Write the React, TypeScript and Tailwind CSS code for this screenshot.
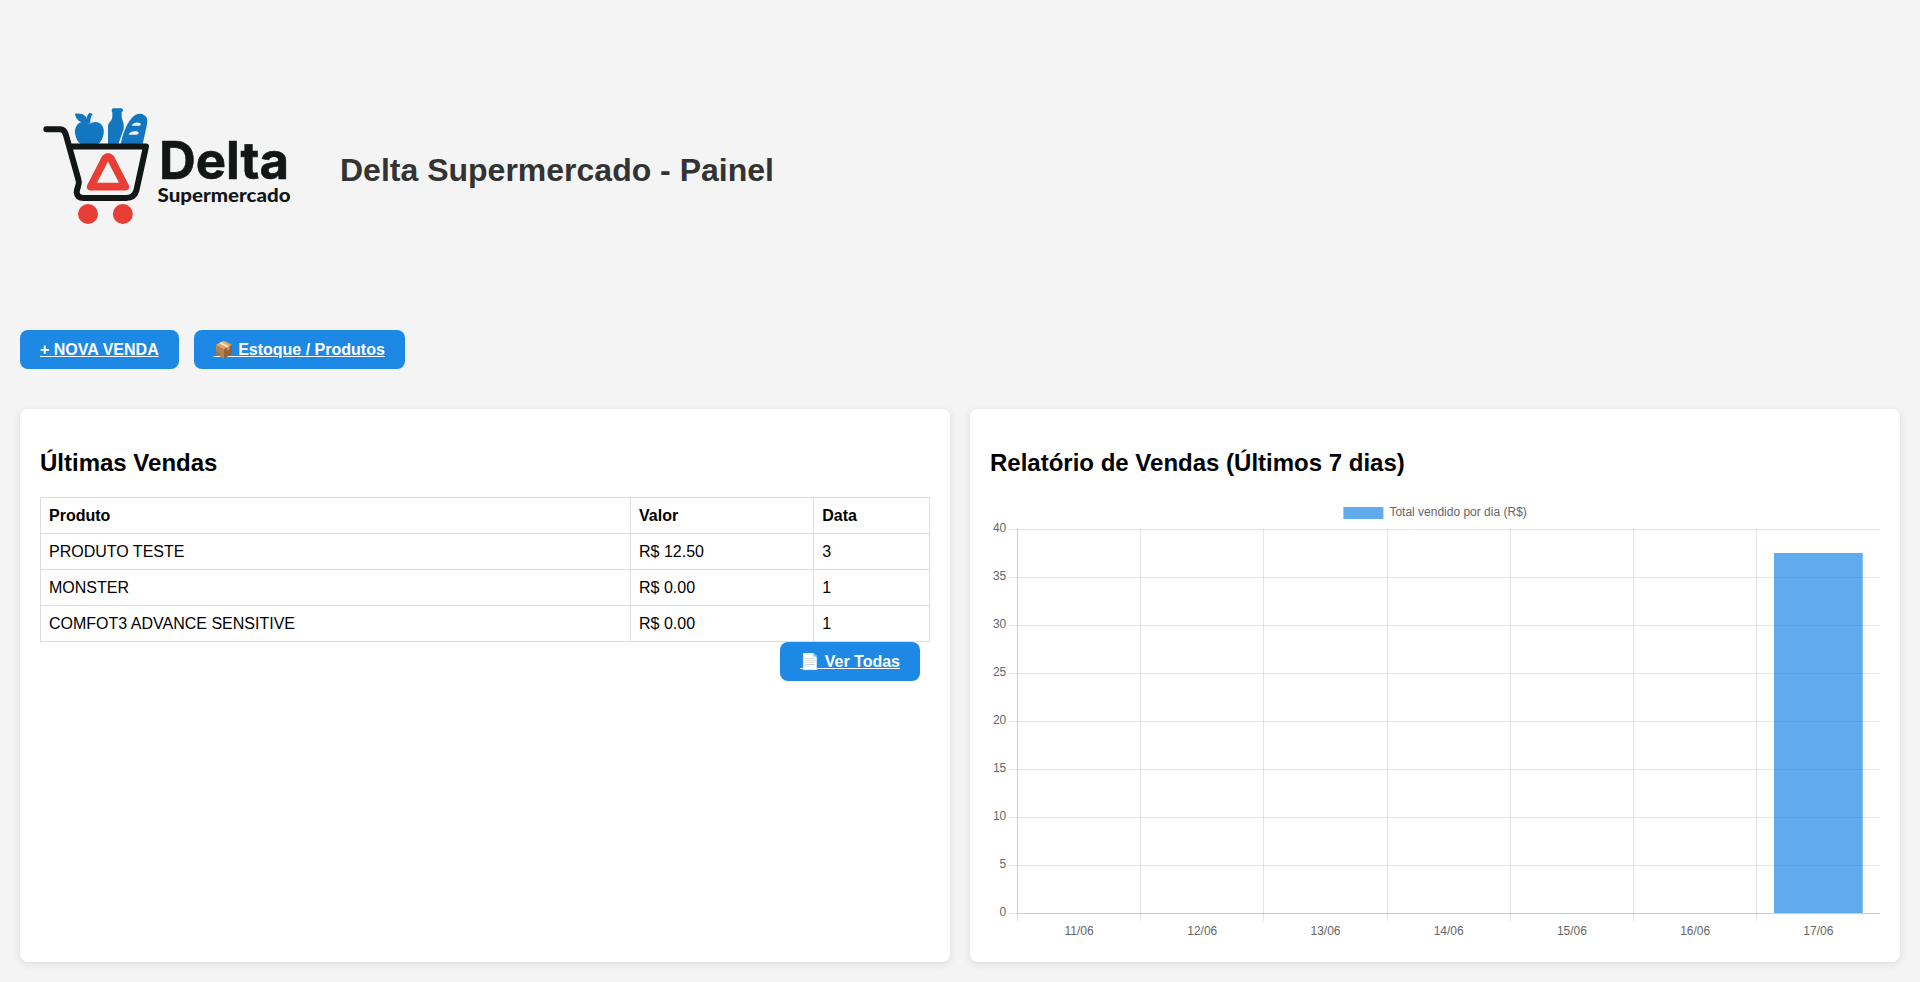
import type { ReactNode } from "react";

const sales = [
  { product: "PRODUTO TESTE", value: "R$ 12.50", date: "3" },
  { product: "MONSTER", value: "R$ 0.00", date: "1" },
  { product: "COMFOT3 ADVANCE SENSITIVE", value: "R$ 0.00", date: "1" },
];

const days = ["11/06", "12/06", "13/06", "14/06", "15/06", "16/06", "17/06"];
const totals = [0, 0, 0, 0, 0, 0, 37.5];
const ticks = [40, 35, 30, 25, 20, 15, 10, 5, 0];

function Logo() {
  return (
    <svg viewBox="0 0 300 300" className="size-[300px] shrink-0" role="img" aria-label="Delta Supermercado">
      <g transform="translate(10 75) scale(0.33333)">
        <g fill="#1277c0">
          <path d="M178 88C187 80 199 79 208 84C219 90 223 103 221 116C219 130 212 141 204 148H153C144 142 137 130 135 115C134 101 139 89 149 83C158 79 168 82 178 88Z" />
          <path d="M172 84C173 63 160 53 135 56C137 74 150 84 172 84Z" />
          <path d="M170 86C168 70 171 60 178 53L188 57C182 66 180 74 181 86Z" />
          <path d="M249 40H275Q279 41 279 46Q279 51 275 52V66C276 75 281 80 281 90V102L265 148H234V95C234 81 246 79 247 66V52Q245 50 245 46Q245 41 249 40Z" />
          <path d="M272 148C278 119 288 88 306 68C317 56 331 53 343 61C354 68 353 80 350 93L338 148Z" />
        </g>
        <g fill="#f4f4f4">
          <path d="M305 92C309 84 316 82 326 83C335 84 334 92 325 92Z" />
          <path d="M295 119C300 111 307 108 319 109C329 111 327 119 319 119Z" />
        </g>
        <path
          d="M49 102.500H91C101 102.500 104 108 107 117L146 257C150 270 140 277 140 292C141 304 149 309 161 309H288C304 309 314 303 319 287L348 154.500H121"
          fill="none"
          stroke="#121615"
          strokeWidth="18"
          strokeLinecap="round"
          strokeLinejoin="round"
        />
        <path
          d="M226 190Q234 181 242 190L286 275H182Z"
          fill="none"
          stroke="#e93e36"
          strokeWidth="23"
          strokeLinejoin="round"
        />
        <circle cx="174" cy="357" r="30" fill="#e93e36" />
        <circle cx="278.500" cy="357" r="30" fill="#e93e36" />
      </g>
      <g fill="#121615">
        <text
          x="139"
          y="159.300"
          fontSize="52"
          textLength="130"
          lengthAdjust="spacingAndGlyphs"
          className="font-['Inter',sans-serif] font-bold"
          stroke="#121615"
          strokeWidth="0.6"
        >
          Delta
        </text>
        <text
          x="137.500"
          y="182.300"
          fontSize="19.5"
          textLength="133"
          lengthAdjust="spacingAndGlyphs"
          className="font-['Lato',sans-serif] font-black"
        >
          Supermercado
        </text>
      </g>
    </svg>
  );
}

function ButtonLink({ children }: { children: ReactNode }) {
  return (
    <a
      href="#"
      className="inline-block h-[39px] rounded-lg bg-[#1e88e5] px-5 py-2.5 text-base leading-[19px] font-bold whitespace-nowrap text-white underline"
    >
      {children}
    </a>
  );
}

function Card({ title, children }: { title: string; children: ReactNode }) {
  return (
    <section className="h-[553px] min-w-0 flex-1 rounded-lg bg-white p-5 shadow-[0_2px_8px_rgba(0,0,0,0.1)]">
      <h2 className="my-5 h-7 text-2xl leading-7 font-bold">{title}</h2>
      {children}
    </section>
  );
}

function SalesChart() {
  const left = 27.4;
  const axis = 27;
  const right = 890;
  const top = 32;
  const bottom = 416;
  const step = (right - left) / days.length;
  const barWidth = step * 0.72;
  return (
    <svg
      viewBox="0 0 890 445"
      className="block h-[445px] w-[890px] font-[Helvetica,Arial,sans-serif] text-xs"
    >
      <rect x="353.4" y="10" width="40" height="12" fill="#1e88e5" fillOpacity="0.7" />
      <text x="399.4" y="18.5" fill="#666">
        Total vendido por dia (R$)
      </text>
      <g fill="#000" fillOpacity="0.1">
        {days.map((day, i) => (
          <rect key={day} x={Math.floor(left + i * step)} y={top} width="1" height="392" />
        ))}
        {ticks.map((tick, i) => (
          <rect key={tick} x="19" y={top + i * 48} width="871" height="1" />
        ))}
        <rect x={axis} y={top} width="1" height="385" />
        <rect x={axis} y={bottom} width="863" height="1" />
      </g>
      {totals.map((total, i) => {
        const height = (total / 40) * (bottom - top);
        return (
          <rect
            key={days[i]}
            x={left + (i + 0.5) * step - barWidth / 2}
            y={bottom - height}
            width={barWidth}
            height={height}
            fill="#1e88e5"
            fillOpacity="0.7"
          />
        );
      })}
      <g fill="#666" textAnchor="end">
        {ticks.map((tick, i) => (
          <text key={tick} x="16.3" y={top + 2.5 + i * 48}>
            {tick}
          </text>
        ))}
      </g>
      <g fill="#666" textAnchor="middle">
        {days.map((day, i) => (
          <text key={day} x={left + (i + 0.5) * step} y="437.5">
            {day}
          </text>
        ))}
      </g>
    </svg>
  );
}

export default function App() {
  return (
    <div className="min-h-screen bg-[#f4f4f4] p-5 font-['Liberation_Sans',Arial,sans-serif] text-black">
      <header className="flex items-center gap-5">
        <Logo />
        <h1 className="text-[32px] leading-9 font-bold text-[#333]">Delta Supermercado - Painel</h1>
      </header>

      <nav className="mt-2.5 flex gap-[15px]">
        <ButtonLink>+ NOVA VENDA</ButtonLink>
        <ButtonLink>📦 Estoque / Produtos</ButtonLink>
      </nav>

      <main className="mt-10 flex gap-5">
        <Card title="Últimas Vendas">
          <table className="w-full table-fixed border-collapse text-left text-base leading-[19px]">
            <colgroup>
              <col className="w-[590px]" />
              <col className="w-[183.3px]" />
              <col />
            </colgroup>
            <thead>
              <tr>
                {["Produto", "Valor", "Data"].map((label) => (
                  <th key={label} className="border border-[#ddd] p-2 font-bold">
                    {label}
                  </th>
                ))}
              </tr>
            </thead>
            <tbody>
              {sales.map((sale) => (
                <tr key={sale.product}>
                  <td className="border border-[#ddd] p-2">{sale.product}</td>
                  <td className="border border-[#ddd] p-2">{sale.value}</td>
                  <td className="border border-[#ddd] p-2">{sale.date}</td>
                </tr>
              ))}
            </tbody>
          </table>
          <div className="flex justify-end pr-2.5">
            <ButtonLink>📄 Ver Todas</ButtonLink>
          </div>
        </Card>
        <Card title="Relatório de Vendas (Últimos 7 dias)">
          <SalesChart />
        </Card>
      </main>
    </div>
  );
}
